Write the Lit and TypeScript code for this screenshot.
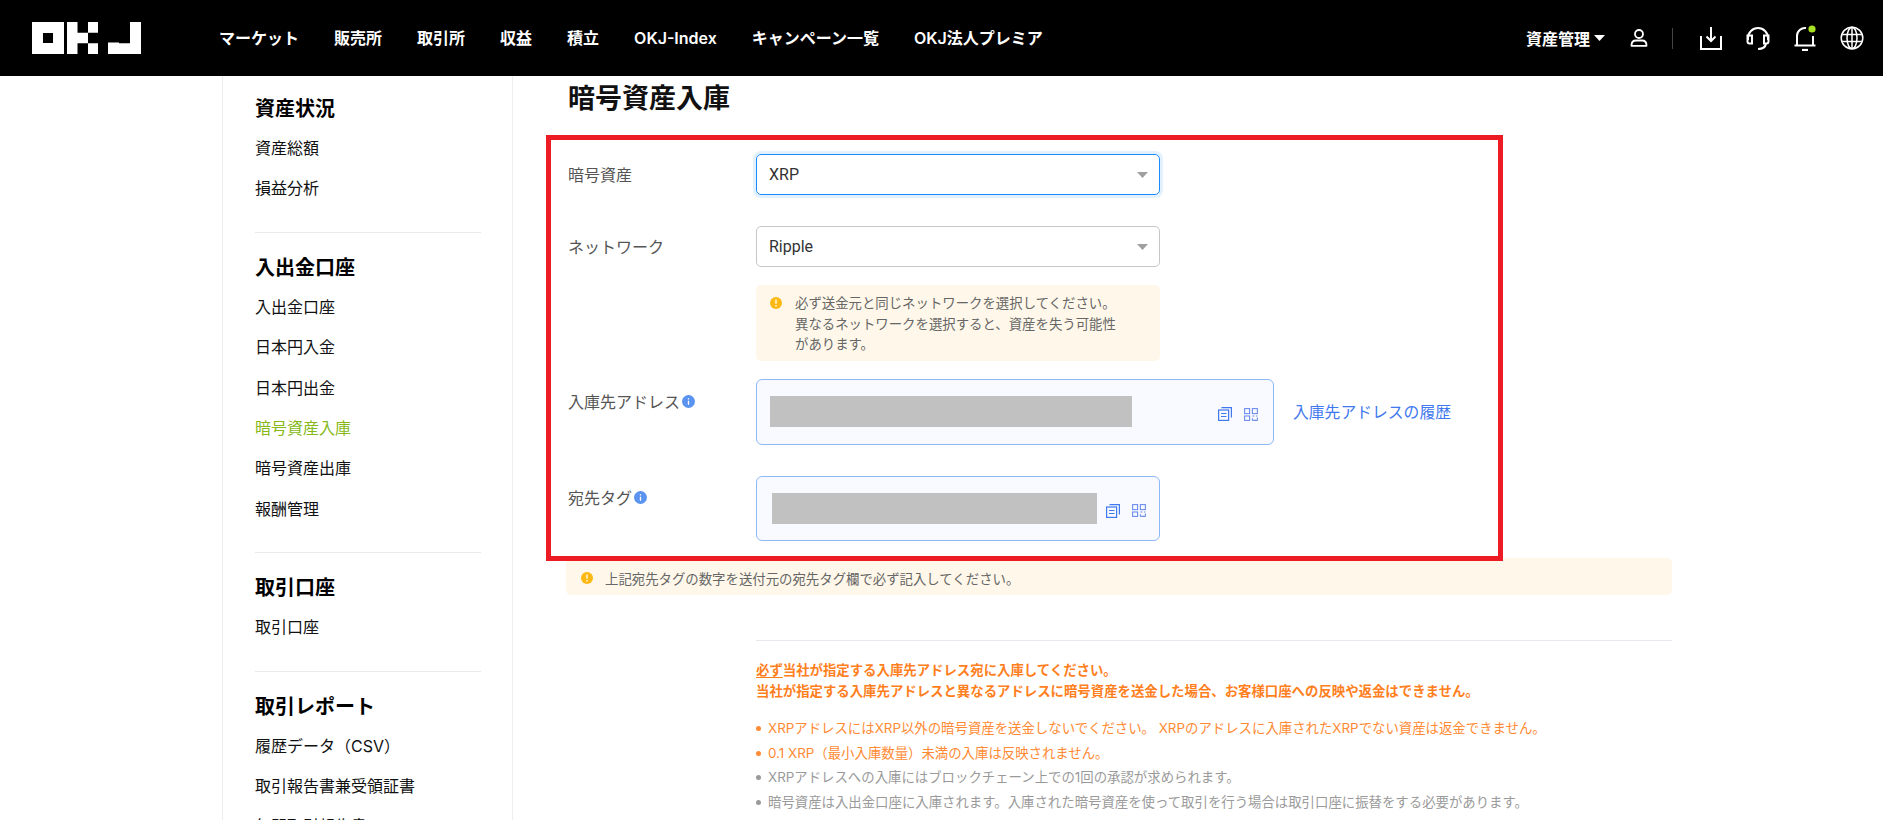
import { LitElement, html, css, svg } from 'lit';
import { customElement } from 'lit/decorators.js';

const NAV = ['マーケット', '販売所', '取引所', '収益', '積立', 'OKJ-Index', 'キャンペーン一覧', 'OKJ法人プレミア'];

const SIDE = [
  { title: '資産状況', items: ['資産総額', '損益分析'] },
  { title: '入出金口座', items: ['入出金口座', '日本円入金', '日本円出金', '暗号資産入庫', '暗号資産出庫', '報酬管理'] },
  { title: '取引口座', items: ['取引口座'] },
  { title: '取引レポート', items: ['履歴データ（CSV）', '取引報告書兼受領証書', '年間取引報告書'] },
];

const NOTES = [
  { text: 'XRPアドレスにはXRP以外の暗号資産を送金しないでください。 XRPのアドレスに入庫されたXRPでない資産は返金できません。', warn: true },
  { text: '0.1 XRP（最小入庫数量）未満の入庫は反映されません。', warn: true },
  { text: 'XRPアドレスへの入庫にはブロックチェーン上での1回の承認が求められます。', warn: false },
  { text: '暗号資産は入出金口座に入庫されます。入庫された暗号資産を使って取引を行う場合は取引口座に振替をする必要があります。', warn: false },
];

const logo = html`<svg width="110" height="32" viewBox="0 0 110 32" fill="#fff">
  <path fill-rule="evenodd" d="M0 0h32v32H0zM11 11v10h10V11z" />
  <path d="M35 0h10.500v32H35zM45.500 10.700h10.500v10.600H45.500zM56 0h10v10.700H56zM56 21.300h10V32H56z" />
  <path d="M98 0h11v32H76V20.500h11V21.300h11z" />
</svg>`;

const userIcon = html`<svg class="ico" width="20" height="20" viewBox="0 0 20 20" fill="none" stroke="#fff" stroke-width="1.800">
  <circle cx="10" cy="6" r="4" />
  <path d="M2.500 17.200c0-3 2-4.700 4.500-4.700h6c2.500 0 4.500 1.700 4.500 4.700v.600h-15z" stroke-linejoin="round" />
</svg>`;

const downloadIcon = html`<svg width="24" height="24" viewBox="0 0 24 24" fill="none" stroke="#fff" stroke-width="2">
  <path d="M2 10v13h20V10" />
  <path d="M12 1v14M7.500 10.500 12 15l4.500-4.500" />
</svg>`;

const headsetIcon = html`<svg width="24" height="24" viewBox="0 0 24 24" fill="none" stroke="#fff" stroke-width="2">
  <path d="M2 14V12a10 10 0 0 1 20 0v2" />
  <path d="M1.500 9.500h4.500v8H3.500a2 2 0 0 1-2-2zM22.500 9.500H18v8h2.500a2 2 0 0 0 2-2z" />
  <path d="M20 17.500c-.5 3.500-3.500 5.500-8 5.500" />
</svg>`;

const bellIcon = html`<svg width="24" height="26" viewBox="0 0 24 26" fill="none" stroke="#fff" stroke-width="2">
  <path d="M4 20v-9a8 8 0 0 1 9-8" />
  <path d="M20 11v9" />
  <path d="M1.500 20.500h21" />
  <path d="M9 25h6" stroke-width="2.200" />
  <circle cx="19" cy="4" r="3.600" fill="#a7e124" stroke="none" />
</svg>`;

const globeIcon = html`<svg width="24" height="24" viewBox="0 0 24 24" fill="none" stroke="#fff" stroke-width="1.500">
  <circle cx="12" cy="12" r="10.800" />
  <ellipse cx="12" cy="12" rx="5" ry="10.800" />
  <path d="M12 1.200v21.600M2.200 8.500h19.600M2.200 15.500h19.600" />
</svg>`;

const copyIcon = html`<svg width="14" height="14" viewBox="0 0 14 14" fill="none" stroke="#3f78ef" stroke-width="1.200">
  <rect x="0.600" y="3" width="10" height="10.400" />
  <path d="M3.500.6h9.900v10M3 6.500h5.500M3 9.500h5.500" />
</svg>`;

const qrIcon = html`<svg width="14" height="13" viewBox="0 0 14 13" fill="none" stroke="#6f8df0" stroke-width="1.100">
  <rect x="0.600" y="0.600" width="5" height="5" />
  <rect x="8.400" y="0.600" width="5" height="5" />
  <rect x="0.600" y="8" width="5" height="4.400" />
  <path d="M8.400 8h2M12 8h1.400M8.400 12.400h5M8.400 10.200v2.200M13.400 9.500v3" />
</svg>`;

const infoIcon = html`<svg class="info" width="13" height="13" viewBox="0 0 13 13">
  <circle cx="6.500" cy="6.500" r="6.500" fill="#5b93f1" />
  <path d="M6.500 3.200v1.300M6.500 5.800v4" stroke="#fff" stroke-width="1.300" />
</svg>`;

const warnIcon = html`<svg class="warn" width="12" height="12" viewBox="0 0 12 12">
  <circle cx="6" cy="6" r="6" fill="#fdb913" />
  <path d="M6 2.600v4.200M6 8.100v1.300" stroke="#fff" stroke-width="1.300" />
</svg>`;

const caret = svg`<path d="M0 0h11L5.500 6z" />`;

@customElement('app-root')
export class AppRoot extends LitElement {
  static styles = css`
    :host {
      display: block;
      height: 820px;
      overflow: hidden;
      position: relative;
      background: #fff;
      font-family: Inter, 'Noto Sans CJK JP', sans-serif;
      color: #111;
    }
    .header {
      height: 76px;
      background: #000;
      display: flex;
      align-items: center;
      padding: 0 19px 0 32px;
      color: #fff;
    }
    .logo {
      display: flex;
      margin-right: 77px;
    }
    .nav {
      display: flex;
      align-items: baseline;
      gap: 35px;
      font-size: 16px;
      line-height: 24px;
      font-weight: 600;
    }
    .right {
      margin-left: auto;
      display: flex;
      align-items: center;
    }
    .asset {
      font-size: 16px;
      font-weight: 700;
    }
    .caret {
      margin-left: 4px;
      fill: #fff;
    }
    .right .user {
      margin-left: 24px;
      display: flex;
    }
    .sep {
      width: 1px;
      height: 21px;
      background: #444;
      margin: 0 26px 0 23px;
    }
    .tools {
      display: flex;
      align-items: center;
      gap: 23px;
    }
    .tools svg {
      display: block;
    }
    .page {
      display: flex;
      padding-left: 222px;
    }
    .side {
      width: 257px;
      flex: none;
      border-left: 1px solid #eee;
      border-right: 1px solid #eee;
      padding: 18px 0 0 32px;
      height: 744px;
    }
    .side-title {
      font-size: 20px;
      line-height: 28px;
      font-weight: 700;
      padding-top: 1px;
      margin: 0 0 5px;
      color: #000;
    }
    .side-item {
      font-size: 16px;
      line-height: 40.400px;
      color: #111;
    }
    .side-item.on {
      color: #86b817;
    }
    .side-sep {
      width: 226px;
      height: 1px;
      background: #eaeaea;
      margin: 23px 0 20px;
    }
    .main {
      padding: 3px 0 0 55px;
      width: 1104px;
    }
    h1 {
      font-size: 27px;
      line-height: 40px;
      font-weight: 700;
      margin: 0 0 35px;
      color: #111;
    }
    .row {
      display: flex;
      margin-bottom: 31px;
    }
    .row.tight {
      margin-bottom: 18px;
    }
    .label {
      width: 188px;
      flex: none;
      display: flex;
      align-items: center;
      gap: 2px;
      height: 24px;
      margin-top: 8px;
      font-size: 16px;
      color: #555;
    }
    .label.addr {
      margin-top: 10px;
    }
    .label.tag {
      margin-top: 9px;
    }
    .select {
      width: 404px;
      height: 41px;
      box-sizing: border-box;
      border: 1px solid #c6c6c6;
      border-radius: 5px;
      display: flex;
      align-items: center;
      justify-content: space-between;
      padding: 0 11px 0 12px;
      font-family: Roboto, 'Noto Sans CJK JP', sans-serif;
      font-size: 16px;
      color: #333;
    }
    .select.focus {
      border-color: #1a8cff;
      box-shadow: 0 0 0 3px #e3f1ff;
    }
    .select .caret {
      fill: #a0a0a0;
    }
    .notice-row {
      margin-left: 188px;
      width: 404px;
      height: 76px;
      box-sizing: border-box;
      background: #fff8ea;
      border-radius: 5px;
      display: flex;
      gap: 13px;
      padding: 8px 0 0 14px;
      margin-bottom: 18px;
      font-size: 13.400px;
      line-height: 20.500px;
      color: #666;
    }
    .warn {
      flex: none;
      margin-top: 4px;
    }
    .box {
      box-sizing: border-box;
      height: 66px;
      border: 1px solid #8fb8f6;
      border-radius: 6px;
      background: #f8faff;
      display: flex;
      align-items: center;
    }
    .box.addr {
      width: 518px;
      padding: 0 15px 0 13px;
    }
    .box.tag {
      width: 404px;
      height: 65px;
      padding: 0 13px 0 15px;
    }
    .mask {
      background: #c1c1c1;
      height: 31px;
      margin-top: -1px;
    }
    .addr .mask {
      width: 362px;
    }
    .tag .mask {
      width: 325px;
    }
    .box-icons {
      margin-left: auto;
      display: flex;
      align-items: center;
      gap: 12px;
      margin-top: 4px;
    }
    .box-icons svg {
      display: block;
    }
    .history {
      align-self: center;
      margin-left: 19px;
      font-size: 15.800px;
      color: #3f78ef;
      margin-top: -2px;
    }
    .banner {
      margin: -14px 0 0 -2px;
      width: 1106px;
      height: 37px;
      box-sizing: border-box;
      background: #fff8ea;
      border-radius: 5px;
      display: flex;
      align-items: center;
      gap: 12px;
      padding: 3px 0 0 15px;
      font-size: 13.400px;
      color: #666;
    }
    .banner .warn {
      margin-top: 0;
    }
    .rule {
      height: 1px;
      background: #e8e8ee;
      margin: 45px 0 19px 188px;
      width: 916px;
    }
    .notes {
      margin-left: 188px;
      font-size: 13.400px;
    }
    .lead {
      font-weight: 700;
      line-height: 20.500px;
      color: #ff7f1e;
      margin-bottom: 15px;
    }
    .lead u {
      text-underline-offset: 2px;
    }
    .note {
      position: relative;
      line-height: 24.700px;
      padding-left: 12px;
      color: #9a9a9a;
    }
    .note::before {
      content: '';
      position: absolute;
      left: 0;
      top: 10px;
      width: 5px;
      height: 5px;
      border-radius: 50%;
      background: currentColor;
    }
    .note.warn-text {
      color: #ff8a33;
    }
    .redbox {
      position: absolute;
      left: 546px;
      top: 135px;
      width: 957px;
      height: 426px;
      box-sizing: border-box;
      border: 5px solid #ed1c24;
      pointer-events: none;
    }
  `;

  private caretSvg() {
    return html`<svg class="caret" width="11" height="6" viewBox="0 0 11 6">${caret}</svg>`;
  }

  render() {
    return html`
      <header class="header">
        <div class="logo">${logo}</div>
        <nav class="nav">${NAV.map((n) => html`<span>${n}</span>`)}</nav>
        <div class="right">
          <span class="asset">資産管理</span>
          ${this.caretSvg()}
          <span class="user">${userIcon}</span>
          <span class="sep"></span>
          <div class="tools">${downloadIcon}${headsetIcon}${bellIcon}${globeIcon}</div>
        </div>
      </header>
      <div class="page">
        <aside class="side">
          ${SIDE.map(
            (s, i) => html`
              ${i > 0 ? html`<div class="side-sep"></div>` : ''}
              <h3 class="side-title">${s.title}</h3>
              ${s.items.map(
                (it) => html`<div class="side-item ${it === '暗号資産入庫' ? 'on' : ''}">${it}</div>`,
              )}
            `,
          )}
        </aside>
        <main class="main">
          <h1>暗号資産入庫</h1>
          <div class="row">
            <div class="label">暗号資産</div>
            <div class="select focus"><span>XRP</span>${this.caretSvg()}</div>
          </div>
          <div class="row tight">
            <div class="label">ネットワーク</div>
            <div class="select"><span>Ripple</span>${this.caretSvg()}</div>
          </div>
          <div class="notice-row">
            ${warnIcon}
            <div>
              必ず送金元と同じネットワークを選択してください。<br />
              異なるネットワークを選択すると、資産を失う可能性<br />
              があります。
            </div>
          </div>
          <div class="row">
            <div class="label addr">入庫先アドレス ${infoIcon}</div>
            <div class="box addr">
              <div class="mask"></div>
              <div class="box-icons">${copyIcon}${qrIcon}</div>
            </div>
            <span class="history">入庫先アドレスの履歴</span>
          </div>
          <div class="row">
            <div class="label tag">宛先タグ ${infoIcon}</div>
            <div class="box tag">
              <div class="mask"></div>
              <div class="box-icons">${copyIcon}${qrIcon}</div>
            </div>
          </div>
          <div class="banner">${warnIcon}<span>上記宛先タグの数字を送付元の宛先タグ欄で必ず記入してください。</span></div>
          <div class="rule"></div>
          <div class="notes">
            <div class="lead">
              <u>必ず</u>当社が指定する入庫先アドレス宛に入庫してください。<br />
              当社が指定する入庫先アドレスと異なるアドレスに暗号資産を送金した場合、お客様口座への反映や返金はできません。
            </div>
            ${NOTES.map((n) => html`<div class="note ${n.warn ? 'warn-text' : ''}">${n.text}</div>`)}
          </div>
        </main>
      </div>
      <div class="redbox"></div>
    `;
  }
}
